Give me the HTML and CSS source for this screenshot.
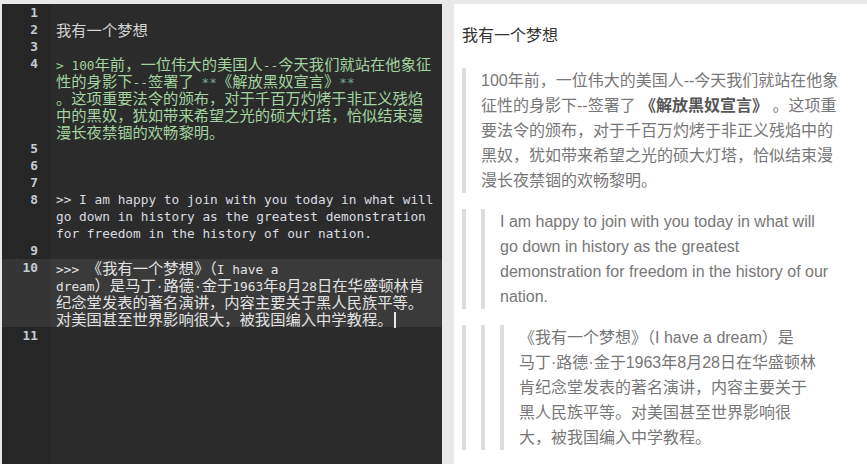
FILE: index.html
```html
<!DOCTYPE html>
<html lang="zh-CN">
<head>
<meta charset="utf-8">
<title>我有一个梦想</title>
<link rel="stylesheet" href="styles.css">
</head>
<body>
<div class="app">
  <div class="editor">
    <div class="line"><div class="num">1</div><div class="txt"><div class="row"></div></div></div>
    <div class="line"><div class="num">2</div><div class="txt"><div class="row"><span class="c">我有一个梦想</span></div></div></div>
    <div class="line"><div class="num">3</div><div class="txt"><div class="row"></div></div></div>
    <div class="line"><div class="num">4</div><div class="txt q">
      <div class="row"><span class="gt">&gt;</span> 100<span class="c">年前，一位伟大的美国人</span>--<span class="c">今天我们就站在他象征</span></div>
      <div class="row"><span class="c">性的身影下</span>--<span class="c">签署了</span> <span class="m">**</span><span class="c">《解放黑奴宣言》</span><span class="m">**</span></div>
      <div class="row"><span class="c">。这项重要法令的颁布，对于千百万灼烤于非正义残焰</span></div>
      <div class="row"><span class="c">中的黑奴，犹如带来希望之光的硕大灯塔，恰似结束漫</span></div>
      <div class="row"><span class="c">漫长夜禁锢的欢畅黎明。</span></div>
    </div></div>
    <div class="line"><div class="num">5</div><div class="txt"><div class="row"></div></div></div>
    <div class="line"><div class="num">6</div><div class="txt"><div class="row"></div></div></div>
    <div class="line"><div class="num">7</div><div class="txt"><div class="row"></div></div></div>
    <div class="line"><div class="num">8</div><div class="txt en">
      <div class="row">&gt;&gt; I am happy to join with you today in what will</div>
      <div class="row">go down in history as the greatest demonstration</div>
      <div class="row">for freedom in the history of our nation.</div>
    </div></div>
    <div class="line"><div class="num">9</div><div class="txt"><div class="row"></div></div></div>
    <div class="line active"><div class="num">10</div><div class="txt">
      <div class="row">&gt;&gt;&gt; <span class="c">《我有一个梦想》（</span>I have a</div>
      <div class="row">dream<span class="c">）是马丁</span>·<span class="c">路德</span>·<span class="c">金于</span>1963<span class="c">年</span>8<span class="c">月</span>28<span class="c">日在华盛顿林肯</span></div>
      <div class="row"><span class="c">纪念堂发表的著名演讲，内容主要关于黑人民族平等。</span></div>
      <div class="row"><span class="c">对美国甚至世界影响很大，被我国编入中学教程。</span><span class="cursor"></span></div>
    </div></div>
    <div class="line"><div class="num">11</div><div class="txt"><div class="row"></div></div></div>
  </div>
  <div class="preview">
    <p class="title">我有一个梦想</p>
    <blockquote class="bq">100年前，一位伟大的美国人--今天我们就站在他象<br>征性的身影下--签署了 <strong>《解放黑奴宣言》</strong> 。这项重<br>要法令的颁布，对于千百万灼烤于非正义残焰中的<br>黑奴，犹如带来希望之光的硕大灯塔，恰似结束漫<br>漫长夜禁锢的欢畅黎明。</blockquote>
    <blockquote class="bq"><blockquote class="bq inner">I am happy to join with you today in what will<br>go down in history as the greatest<br>demonstration for freedom in the history of our<br>nation.</blockquote></blockquote>
    <blockquote class="bq"><blockquote class="bq inner"><blockquote class="bq inner">《我有一个梦想》（I have a dream）是<br>马丁·路德·金于1963年8月28日在华盛顿林<br>肯纪念堂发表的著名演讲，内容主要关于<br>黑人民族平等。对美国甚至世界影响很<br>大，被我国编入中学教程。</blockquote></blockquote></blockquote>
  </div>
</div>
</body>
</html>
```
FILE: styles.css
```css
html, body {
  margin: 0;
  padding: 0;
}
body {
  background: #e9e9e9;
  width: 867px;
  height: 464px;
  overflow: hidden;
}
.app {
  display: flex;
  gap: 12px;
  padding: 4px 0 0 2px;
  height: 464px;
  box-sizing: border-box;
}
.editor {
  width: 440px;
  flex: none;
  background: linear-gradient(to right, #262626 49px, #2b2b2b 49px);
  font-family: "DejaVu Sans Mono", "Liberation Mono", monospace;
  font-size: 12.8px;
  line-height: 17px;
  color: #d4d4d4;
}
.line {
  display: flex;
}
.num {
  width: 49px;
  flex: none;
  box-sizing: border-box;
  padding-right: 13px;
  text-align: right;
  color: #c3cbd5;
  font-weight: bold;
  background: #262626;
}
.txt {
  flex: 1;
  padding-left: 5px;
}
.row {
  height: 17px;
  white-space: pre;
}
.c {
  display: inline-block;
  height: 17px;
  font-family: "Noto Sans CJK SC", sans-serif;
  font-size: 15.3px;
  line-height: 17px;
}
.q {
  color: #a3d3a0;
}
.q .gt {
  color: #8fd18a;
}
.q .m {
  color: #6fa596;
}
.en {
  color: #d8dbe0;
}
.active .num {
  background: #353535;
}
.active .txt {
  background: #3a3a3a;
  color: #e2e2e2;
}
.cursor {
  display: inline-block;
  width: 2px;
  height: 16px;
  background: #e8e8e8;
  vertical-align: -3px;
  margin-left: 1px;
}
.preview {
  flex: 1;
  background: #ffffff;
  padding: 19px 5px 0 8px;
  font-family: "Liberation Sans", "Noto Sans CJK SC", sans-serif;
  font-size: 16px;
  line-height: 25px;
  color: #777777;
}
.title {
  margin: 0 0 20px;
  color: #333333;
}
.bq {
  margin: 0 0 16px;
  padding: 0 15px;
  border-left: 4px solid #dddddd;
  white-space: nowrap;
}
.bq.inner {
  margin: 0;
}
.bq strong {
  color: #555555;
}
```
